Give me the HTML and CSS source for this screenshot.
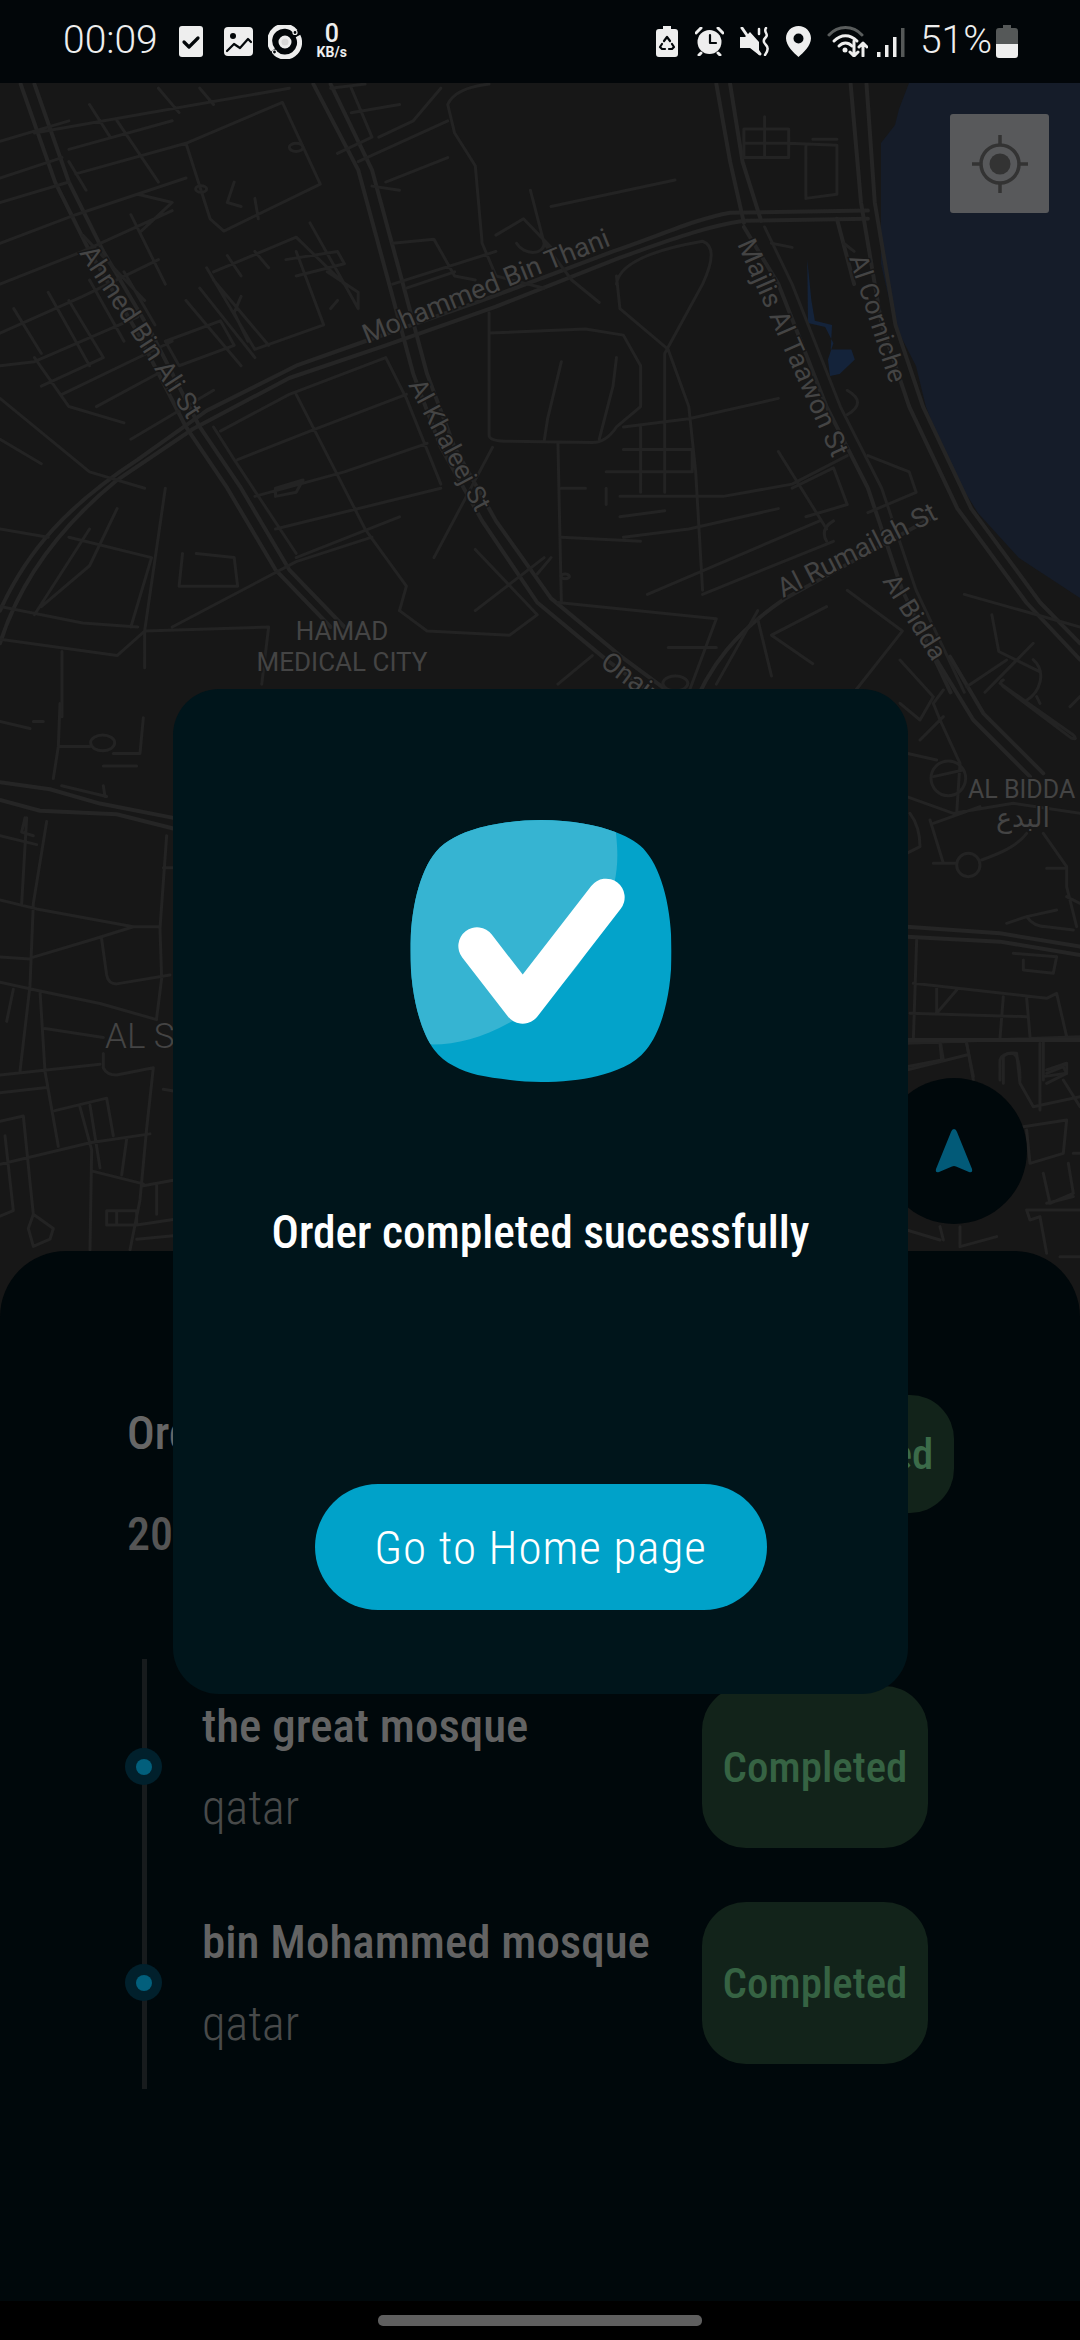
FILE: index.html
```html
<!DOCTYPE html>
<html lang="en">
<head>
<meta charset="utf-8">
<title>Order completed</title>
<link rel="stylesheet" href="styles.css">
</head>
<body>
<div class="screen">
  <header class="status">
    <span class="clock">00:09</span>
    <svg class="ic ic-doc" viewBox="0 0 24 31"><rect width="24" height="31" rx="3" class="f"/><path d="M5 16l5 5 9-9" class="cut w3"/></svg>
    <svg class="ic ic-img" viewBox="0 0 29 29"><rect width="29" height="29" rx="4" class="f"/><circle cx="9" cy="9" r="3" class="d"/><path d="M3 24l7-7 6 4 8-9 3 3" class="cut w2"/></svg>
    <svg class="ic ic-ring" viewBox="0 0 34 34"><path d="M27.500 6.500A14.500 14.500 0 0 0 5 25" class="arc"/><path d="M7 28A14.500 14.500 0 0 0 30 11" class="arc"/><circle cx="17" cy="17" r="5" class="ringc"/><circle cx="27" cy="7.500" r="2" class="ringd"/><circle cx="6.500" cy="27" r="2" class="ringd"/></svg>
    <div class="speed"><span class="speed-n">0</span><span class="speed-u">KB/s</span></div>
    <div class="status-right">
      <svg class="ic ic-bat2" viewBox="0 0 22 31"><path d="M7 0h8v3h4a3 3 0 0 1 3 3v22a3 3 0 0 1-3 3H3a3 3 0 0 1-3-3V6a3 3 0 0 1 3-3h4z" class="f"/><path d="M8 15l3-4 3 4M6 18l-2 3 2 2h3M16 18l2 3-2 2h-3" class="cut w2"/></svg>
      <svg class="ic ic-alarm" viewBox="0 0 29 29"><path d="M1 6l5-5M28 6l-5-5M6 26l-2 2M23 26l2 2" class="lt"/><circle cx="14.500" cy="15" r="12" class="f"/><path d="M15 8v8h6" class="cut w2"/></svg>
      <svg class="ic ic-mute" viewBox="0 0 30 29"><path d="M0 10h5l5-5 9 10v13l-9-7H0z" class="f"/><path d="M2 1l18 26" class="lt"/><path d="M19 2v5M26 1c-3 4 3 6 0 9s-3 5 0 8 2 6-1 10" class="lt2"/></svg>
      <svg class="ic ic-pin" viewBox="0 0 25 31"><path fill-rule="evenodd" d="M12.500 0C5.600 0 0 5.500 0 12.300 0 20 8 27 12.500 31 17 27 25 20 25 12.300 25 5.500 19.400 0 12.500 0zm0 7.500a5 5 0 1 1 0 10 5 5 0 0 1 0-10z" class="f"/></svg>
      <svg class="ic ic-wifi" viewBox="0 0 41 31"><path d="M2 9C11-1 26-1 35 9" class="gr"/><path d="M7 15c7-7 16-7 23 0" class="lt"/><path d="M12 20c4-4 9-4 13 0" class="lt"/><circle cx="18" cy="24" r="2.500" class="f"/><path d="M27 15v15M23 26l4 4 4-4M36 30V17M32 21l4-4 4 4" class="lt"/></svg>
      <svg class="ic ic-sig" viewBox="0 0 28 30"><rect x="0" y="25" width="3.500" height="5" class="f"/><rect x="8" y="18" width="3.500" height="12" class="f"/><rect x="16" y="10" width="3.500" height="20" class="f"/><rect x="24" y="1" width="3.500" height="29" class="b"/></svg>
      <span class="clock pct">51%</span>
      <svg class="ic ic-bat" viewBox="0 0 22 33"><path d="M7 0h8v3h4a3 3 0 0 1 3 3v13H0V6a3 3 0 0 1 3-3h4z" class="b"/><path d="M0 19h22v11a3 3 0 0 1-3 3H3a3 3 0 0 1-3-3z" class="f"/></svg>
    </div>
  </header>

  <main class="stage">
    <svg class="map" viewBox="0 83 1080 1190" aria-hidden="true">
      <path class="water" d="M909 83L899 109 895 125 881 143 881 264 895 325 916 366 926 407 950 468 978 513 1019 558 1080 598V83z"/>
      <g transform="translate(0,80) scale(.6888,.4082)">
        <path class="pond" d="M1172 440l6 100 5 50 25 10-2 60 30 0 5 25-22 35-14 5-3-40 8-40-12-40-25-10z"/>
        <!-- major -->
        <path class="R" d="M0 1300C40 1150 100 1040 200 930L300 810 430 700 530 640 700 540 890 420C960 380 1010 340 1060 325L1260 320"/>
        <path class="R" d="M0 1380C30 1220 90 1090 170 980L280 855 420 730 560 650 720 555 900 435C960 400 1020 360 1080 345L1260 340"/>
        <path class="R" d="M455 10L520 220 565 500 600 720 640 900 700 1080 780 1280 880 1420 960 1520"/>
        <path class="R" d="M480 10L540 220 585 500 620 720 660 900 720 1080 800 1270 900 1410 980 1510"/>
        <path class="R" d="M30 10L80 250 130 420 200 620 270 850 330 1000 400 1200 480 1340"/>
        <path class="R" d="M50 10L100 250 150 420 220 620 290 850 350 1000 420 1200 500 1340"/>
        <path class="R" d="M1040 10L1060 200 1080 350"/>
        <path class="R" d="M1060 10L1078 200 1105 345"/>
        <path class="R" d="M1235 10L1250 300 1280 600 1320 800 1390 1050 1490 1280 1568 1420"/>
        <path class="R" d="M1258 10L1270 300 1300 600 1340 800 1410 1050 1510 1280 1568 1380"/>
        <path class="R" d="M1215 340L1240 500"/>
        <path class="R" d="M1080 360L1130 500 1200 800 1260 1000 1310 1250 1380 1500"/>
        <path class="r" d="M1110 360L1150 500 1220 800 1280 1000 1330 1250 1400 1500"/>
        <path class="R" d="M1000 1560C1030 1430 1070 1350 1140 1270L1350 1075"/>
        <!-- top left -->
        <path class="r" d="M50 130L420 20M0 150L100 100M270 155L410 55 465 255 325 370 305 340 270 155M110 330L270 240M0 500L120 420 250 320M310 470L430 385 500 500 520 560M0 620L120 530 230 440M50 690L200 580M90 770L250 640M0 400L110 330M170 100L230 250M100 200L125 270M190 330L240 500M300 460L370 660 470 600 430 420M240 640L260 700 340 650 320 590 240 640M270 540L350 700M290 510L370 680M310 490L390 650M350 530L340 570 360 640M415 440L490 420 500 450 430 480M450 350L500 500M475 470L520 520 520 560M480 560L490 540M550 140L600 100 640 20M510 80L580 60M520 200L650 100M540 260L580 270M100 540L150 680 60 750M0 780L130 960 210 1000M50 680L100 800 180 840M0 880L60 940M120 380L210 540M205 370L250 300 200 280M330 430L350 480M370 420L390 460M100 170L250 100M110 230L270 155M0 300L100 250M0 240L90 190M230 20L260 80M290 20L310 60M130 60L160 140M180 470L225 600M130 490L180 640M70 520L130 700M20 560L60 670M0 700L50 690M140 800L250 700M190 880L310 760M340 250L330 300 350 310M370 290L375 340M480 20L530 10M510 20L540 140 490 180"/>
        <circle class="r" cx="292" cy="267" r="8"/><circle class="r" cx="430" cy="165" r="10"/>
        <path class="r" d="M650 60L660 130 690 210 700 400 720 480 790 510M770 270L790 400 830 490 870 545M800 310L980 245M720 380L760 340 800 410M570 400L630 390 660 480 690 490M590 510L660 470M750 400C760 430 790 430 790 400M570 500L720 420M650 60Q660 20 710 10M560 250L650 190"/>
        <path class="r" d="M1080 120H1145V190H1080ZM1110 90V190M1145 155L1215 160V280L1170 290M1170 160V290M1180 145H1215M1080 155H1145"/>
        <path class="r" d="M710 570V870Q710 885 740 885L860 888Q880 888 895 850L930 800V700L905 625 850 610 710 620M815 690L795 830 790 885M895 680L890 750 870 880M810 890L815 1280M815 1000H850"/>
        <path class="r" d="M895 480L900 560 970 660 1000 800 1010 960 1020 1250M895 500Q900 430 1020 395 1045 410 1020 500L965 670V1010M905 850L1000 830 1130 780M930 850V1010M905 905H1005V960H880M900 1020H1050L1150 990 1230 920M905 1120L1000 1100 1130 1050M815 1120L930 1130M900 1070L965 1055M940 1260L1190 1080M1020 1260L1210 1130M1130 910L1200 1100M1040 1320L810 1280M1040 1320L1000 1500M880 1000V1040"/>
        <path class="r" d="M1120 400L1150 410M1225 400L1240 420M1260 920L1320 960 1330 1010 1260 1060M1150 1000L1210 950 1230 1040 1170 1070M1200 1130Q1190 1100 1210 1080M1230 760Q1260 790 1230 820"/>
        <path class="r" d="M580 1300L620 1350 740 1360 780 1310 690 1150M630 1170L715 900M690 1300L790 1170M820 1210A6 6 0 1 0 821 1210M800 1170L780 1210"/>
        <path class="r" d="M310 850L340 930 430 1160M320 860L420 770 560 680 590 780 640 990M430 770L530 1100 590 1240 580 1300M345 930L450 860 590 770M370 1020L500 960 620 890M400 1100L640 1000M430 1170L580 1070M250 1340L430 1180 540 1120M210 1350L390 1340 380 1480M210 1350V1440M90 1400V1560M0 1370L170 1410 210 1350 240 1000M0 1290L120 1330 200 1340M100 1120L220 1170 190 1340M170 1050L130 1190 60 1290M285 1160L340 1170 345 1240H260L265 1160M400 1000L440 980 430 1010 400 1020 400 1000M0 1100L70 1120M130 1100L50 1310"/>
        <path class="r" d="M1100 1320L1120 1460M1100 1300L1040 1480M1200 1290L1120 1360 1180 1430M1230 1250L1310 1350 1240 1500M1400 1260L1568 1340M1440 1310L1450 1400 1510 1450M1500 1380L1430 1500M1500 1420C1520 1450 1510 1500 1490 1520M970 1390H1040M980 1460A18 18 0 1 0 981 1460M810 1480L860 1410"/>
      </g>
      <g transform="translate(0,700) scale(.3333,.3571)">
        <path class="R" d="M0 230L150 250 300 290 520 330M0 280L120 310 350 320 520 360"/>
        <path class="r" d="M180 10L175 130 160 220M175 130H270M340 150H420L430 50M310 185H410M185 240L320 270M310 240L315 270M140 340L100 570 90 800 60 1040M80 330L65 570M0 560L110 585 400 635H480M100 720L280 670 400 635M305 670L320 770Q325 795 350 795L510 770M500 380L480 640 485 780 470 890M0 790L120 815 300 850 470 895M120 815L135 1040 175 1250M0 1050L300 1020M135 920L310 945M310 990V1030Q320 1050 350 1050L460 1030 440 1200 420 1400 390 1540M0 1100L140 1085M165 1150L320 1115 340 1220M240 1140L275 1260 270 1540M270 1135L300 1310M0 1300L270 1240 450 1215M280 1320L430 1355M380 1230L365 1330M0 1180L70 1165 90 1350 100 1440 160 1480 150 1510 100 1530 85 1480 100 1440M15 1220L40 1430 0 1445M320 1430H410V1470H320ZM350 1430V1470M410 1470L520 1455M410 1510L520 1500M430 1360L520 1345M520 470H490M490 1090L520 1095M0 60L90 80M100 60H130M0 380L110 405M75 330L65 370 100 380M0 720L90 725M40 810L20 900M470 1360V1440"/>
        <ellipse class="r" cx="308" cy="120" rx="36" ry="22"/>
      </g>
      <g transform="translate(900,640) scale(.3333)">
        <path class="R" d="M110 60L220 240 390 410M150 50L250 220 430 400"/>
        <path class="R" d="M20 860L300 880 540 920M20 890L300 905 540 945"/>
        <path class="r" d="M200 140L320 60M300 130L520 285Q535 300 515 295L310 140Q295 125 310 120M420 190L410 170M510 200L540 170M0 60L100 170 60 240 0 190M130 150L100 190 120 240 180 370 170 520M130 230L60 300M20 340L110 360M100 410L190 390M20 470L160 520 340 490 540 520M100 550L240 500M30 520Q60 560 60 620L20 640M90 540L130 670M100 670H170M245 660C300 640 350 620 380 580M430 580L500 680 500 740 530 860M440 685H500M500 770L540 790M320 850L380 830 470 810M380 830Q400 860 440 860L520 870M50 900L40 1200M40 1030L440 1075 470 1060 500 1190M370 960V990L460 1000 470 950M340 940L470 950M110 1040V1120L170 1050M310 1070L300 1195M380 1075L390 1190M30 1120L380 1130M20 1210L540 1190M120 1200L130 1260M200 1210L220 1320M20 1290L200 1245M300 1320V1260Q305 1240 340 1240 360 1250 360 1320M430 1200V1320M440 1290L500 1270 500 1300 430 1310"/>
        <circle class="r" cx="145" cy="415" r="52"/><circle class="r" cx="205" cy="675" r="35"/>
      </g>
      <g transform="translate(860,1040) scale(.3333)">
        <path class="R" d="M140 0H660"/>
        <path class="r" d="M240 10L245 60 140 80M320 10L340 110M430 130V50Q440 35 470 40L480 130 520 200 660 170M540 10V210M560 100L610 80 620 100 560 130M610 120L660 200M490 260L620 240 610 340 510 370 500 270M640 340H660M550 400L570 490 640 460 625 370M560 490L640 470M500 510L660 510M500 510L510 540 540 530 560 640M140 570L240 600M240 560L250 600M300 560L300 620 410 590M600 650H660"/>
      </g>
      <g class="lab">
        <text transform="translate(79,253) rotate(57)">Ahmed Bin Ali St</text>
        <text transform="translate(367,344) rotate(-22)">Mohammed Bin Thani</text>
        <text class="sm" transform="translate(408,385) rotate(62)">Al Khaleej St</text>
        <text transform="translate(737,244) rotate(66)">Majlis Al Taawon St</text>
        <text class="sm" transform="translate(849,258) rotate(72)">Al Corniche</text>
        <text transform="translate(783,598) rotate(-27)">Al Rumailah St</text>
        <text class="sm" transform="translate(882,581) rotate(58)">Al Bidda</text>
        <text transform="translate(599,665) rotate(37)">Onaiza</text>
        <text x="342" y="640" class="mid sm">HAMAD</text>
        <text x="342" y="671" class="mid sm">MEDICAL CITY</text>
        <text x="105" y="1048" class="big">AL SADD</text>
        <text x="968" y="798" class="xs">AL BIDDA</text>
        <text x="1023" y="827" class="mid">البدع</text>
      </g>
    </svg>

    <button class="gps" type="button" aria-label="My location">
      <svg viewBox="0 0 56 58" class="gps-ic"><circle cx="28" cy="29" r="19" class="gps-ring"/><circle cx="28" cy="29" r="10.500" class="gps-dot"/><path d="M28 0v10M28 48v10M0 29h10M46 29h10" class="gps-ring"/></svg>
    </button>
    <button class="fab" type="button" aria-label="Navigate">
      <svg viewBox="0 0 38 45" class="fab-ic"><path d="M19 1Q21 1 22 4L37 41Q38 45 34 44L21 38.500Q19 37.500 17 38.500L4 44Q0 45 1 41L16 4Q17 1 19 1z"/></svg>
    </button>

    <section class="sheet">
      <div class="order-head">
        <div class="order-info">
          <div class="order-title">Order</div>
          <div class="order-date">2024</div>
        </div>
        <div class="badge">Completed</div>
      </div>
      <div class="stops">
        <div class="rail"></div>
        <div class="stop">
          <span class="dot"></span>
          <div class="stop-text"><div class="stop-name">the great mosque</div><div class="stop-place">qatar</div></div>
          <div class="badge">Completed</div>
        </div>
        <div class="stop">
          <span class="dot"></span>
          <div class="stop-text"><div class="stop-name">bin Mohammed mosque</div><div class="stop-place">qatar</div></div>
          <div class="badge">Completed</div>
        </div>
      </div>
    </section>
  </main>

  <footer class="navbar"><span class="home-pill"></span></footer>

  <div class="dialog" role="dialog">
    <svg class="success" viewBox="88 60 784 786">
      <defs><clipPath id="sq"><path d="M480 60C570 60 650 75 705 97 745 113 775 130 795 155 845 215 872 330 872 453 872 575 845 690 795 750 760 795 700 815 650 828 600 840 540 846 480 846 420 846 340 835 290 825 240 812 190 790 160 750 115 690 88 575 88 453 88 330 115 215 165 155 195 120 240 100 290 85 340 70 420 60 480 60Z"/></clipPath></defs>
      <g clip-path="url(#sq)">
        <rect x="88" y="60" width="784" height="786" class="sq-base"/>
        <path class="sq-hi" d="M700 60C712 150 712 190 700 250 660 450 520 610 385 668 300 715 220 735 145 733H0V0H700Z"/>
      </g>
      <path class="sq-check" d="M288 438L425 615 675 292"/>
    </svg>
    <h1 class="dlg-title">Order completed successfully</h1>
    <button class="home-btn" type="button">Go to Home page</button>
  </div>
</div>
</body>
</html>
```

FILE: styles.css
```css
* { box-sizing: border-box; }
html, body { margin: 0; padding: 0; background: #000; }
.screen { position: relative; width: 1080px; height: 2340px; display: flex; flex-direction: column; overflow: hidden; font-family: Roboto, sans-serif; }

/* status bar */
.status { height: 83px; flex: none; background: #020609; display: flex; align-items: center; padding: 0 62px 0 63px; color: #eee; }
.clock { font-family: Roboto, sans-serif; font-size: 39px; font-weight: 300; line-height: 40px; margin-top: -3px; }
.ic { display: block; flex: none; }
.ic-doc { width: 24px; height: 31px; margin-left: 21px; }
.ic-img { width: 29px; height: 29px; margin-left: 21px; }
.ic-ring { width: 34px; height: 34px; margin-left: 15px; }
.speed { width: 38px; margin-left: 11px; display: flex; flex-direction: column; align-items: center; font-family: Roboto, sans-serif; font-weight: 700; line-height: 1; margin-top: -1px; }
.speed-n { font-size: 25px; font-weight: 500; line-height: 22px; }
.speed-u { font-size: 14px; line-height: 15px; }
.status-right { margin-left: auto; display: flex; align-items: center; }
.ic-bat2 { width: 22px; height: 31px; }
.ic-alarm { width: 29px; height: 29px; margin-left: 17px; }
.ic-mute { width: 30px; height: 29px; margin-left: 16px; }
.ic-pin { width: 25px; height: 31px; margin-left: 16px; }
.ic-wifi { width: 41px; height: 31px; margin-left: 16px; }
.ic-sig { width: 28px; height: 30px; margin-left: 9px; }
.pct { margin-left: 15px; }
.ic-bat { width: 22px; height: 33px; margin-left: 4px; }
.f { fill: #eee; }
.d { fill: #020609; }
.b { fill: #555858; }
.cut { fill: none; stroke: #020609; stroke-linecap: round; stroke-linejoin: round; }
.w3 { stroke-width: 3.2; }
.w2 { stroke-width: 2.2; }
.lt { fill: none; stroke: #eee; stroke-width: 3; stroke-linecap: round; stroke-linejoin: round; }
.lt2 { fill: none; stroke: #eee; stroke-width: 2.5; stroke-linecap: round; }
.gr { fill: none; stroke: #5a5d5d; stroke-width: 3; stroke-linecap: round; }
.arc { fill: none; stroke: #eee; stroke-width: 5; }
.ringc { fill: #d8d8d8; stroke: #eee; stroke-width: 3; }
.ringd { fill: #020609; stroke: #eee; stroke-width: 1.2; }

/* map stage */
.stage { position: relative; flex: 1; background: #171717; overflow: hidden; }
.map { position: absolute; left: 0; top: 0; width: 1080px; height: 1190px; }
.water { fill: #151c29; }
.pond { fill: #14233a; }
.r, .R { fill: none; stroke: #232323; stroke-linecap: round; stroke-linejoin: round; vector-effect: non-scaling-stroke; }
.r { stroke-width: 3; }
.R { stroke-width: 4; stroke: #252525; }
.lab text { font-family: Roboto, "DejaVu Sans", sans-serif; font-size: 27px; fill: #444; paint-order: stroke; stroke: #171717; stroke-width: 3px; }
.lab .mid { text-anchor: middle; }
.lab .sm { font-size: 26px; }
.lab .xs { font-size: 25px; }
.lab .big { font-size: 35px; font-weight: 300; }

.gps { position: absolute; left: 950px; top: 31px; width: 99px; height: 99px; padding: 0; border: 0; border-radius: 3px; background: #58595b; display: flex; align-items: center; justify-content: center; }
.gps-ic { width: 56px; height: 58px; }
.gps-ring { fill: none; stroke: #333; stroke-width: 3.5; }
.gps-dot { fill: #333; }
.fab { position: absolute; left: 881px; top: 995px; width: 146px; height: 146px; padding: 0; border: 0; border-radius: 50%; background: #00080b; display: flex; align-items: center; justify-content: center; }
.fab-ic { width: 38px; height: 45px; fill: #025a78; margin-top: -2px; }

/* bottom sheet */
.sheet { position: absolute; left: 0; right: 0; bottom: 0; height: 1050px; background: #00080b; border-radius: 66px 66px 0 0; }
.order-head { display: flex; justify-content: space-between; align-items: flex-start; padding: 144px 126px 0 127px; }
.order-info { padding-top: 10px; }
.order-title { font-size: 46px; font-weight: 500; font-stretch: 75%; line-height: 56px; color: #666; }
.order-date { font-size: 46px; font-weight: 500; font-stretch: 75%; line-height: 56px; color: #555; margin-top: 45px; }
.badge { width: 226px; height: 118px; flex: none; border-radius: 44px; background: #12231a; color: #366343; display: flex; align-items: center; justify-content: center; font-size: 43px; font-weight: 500; font-stretch: 75%; }
.order-head .badge { color: #3b6b49; }
.stops { position: relative; margin-top: 97px; padding: 26px 152px 25px 125px; display: flex; flex-direction: column; gap: 53px; }
.rail { position: absolute; left: 142px; top: 0; bottom: 0; width: 5px; background: #171b1d; }
.stop { display: flex; align-items: center; height: 163px; position: relative; }
.dot { width: 37px; height: 37px; flex: none; border-radius: 50%; background: #01202c; display: flex; align-items: center; justify-content: center; }
.dot::after { content: ""; width: 16px; height: 16px; border-radius: 50%; background: #025f7c; }
.stop-text { flex: 1; margin-left: 40px; }
.stop-name { font-size: 47px; font-weight: 500; font-stretch: 75%; line-height: 56px; color: #636363; }
.stop-place { font-size: 48px; font-weight: 300; font-stretch: 75%; line-height: 56px; color: #484a4a; margin-top: 26px; }
.stop .badge { height: 162px; }

.navbar { height: 39px; flex: none; background: #000; display: flex; justify-content: center; padding-top: 14px; }
.home-pill { width: 324px; height: 11px; border-radius: 5px; background: #5f5f5f; }

/* dialog */
.dialog { position: absolute; left: 173px; top: 689px; width: 735px; height: 1005px; border-radius: 46px; background: #00151b; display: flex; flex-direction: column; align-items: center; }
.success { width: 262px; height: 262px; margin-top: 131px; flex: none; }
.sq-base { fill: #03a3ca; }
.sq-hi { fill: #36b4d2; }
.sq-check { fill: none; stroke: #fff; stroke-width: 112; stroke-linecap: round; stroke-linejoin: round; }
.dlg-title { margin: 121px 0 0; font-size: 45.5px; font-weight: 500; font-stretch: 75%; line-height: 60px; color: #fff; white-space: nowrap; }
.home-btn { margin-top: 221px; width: 452px; height: 126px; border: 0; border-radius: 63px; background: #00a2c9; color: #fff; font-family: inherit; font-stretch: 75%; font-size: 47px; font-weight: 300; letter-spacing: 1px; padding: 0; }
```
